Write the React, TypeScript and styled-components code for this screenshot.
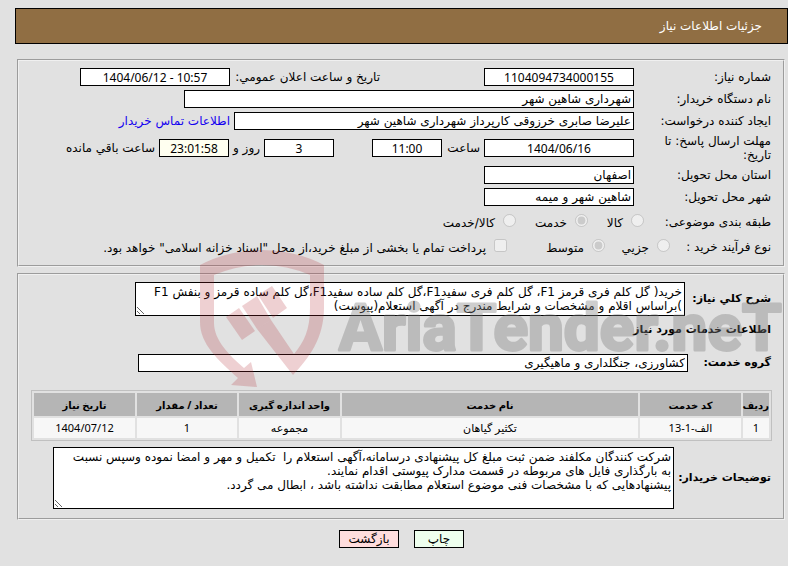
import React from "react";
import styled, { createGlobalStyle } from "styled-components";

const GlobalStyle = createGlobalStyle`
  * { box-sizing: border-box; }
  body {
    margin: 0;
    background: #e1e1e1;
    color: #000;
    font: 12px/14px "DejaVu Sans", sans-serif;
  }
`;

const Page = styled.main`
  direction: rtl;
  padding: 8px 0 16px 15px;
`;

const TitleBar = styled.h1`
  margin: 0 0 15px;
  padding: 10px 25px;
  border: 1px solid #000;
  background: #906e43;
  color: #fff;
  font-size: 12px;
  font-weight: 400;
  line-height: 14px;
`;

const Content = styled.div`
  position: relative;
  margin: 0 3px 0 2px;
`;

const Panel = styled.fieldset`
  min-width: 0;
  margin: 0 0 6px;
  padding: 7px 12px 9px;
  border: 2px groove #f0f0f0;
`;

const Rows = styled.div`
  display: flex;
  flex-direction: column;
  gap: 4px;
`;

const Row = styled.div<{ $height?: number }>`
  display: flex;
  align-items: center;
  min-height: ${(p) => p.$height ?? 18}px;
`;

const Label = styled.label`
  flex: 0 0 137px;
  padding-left: 26px;
`;

const GroupLabel = styled.span<{ $width: number }>`
  flex: 0 0 ${(p) => p.$width}px;
  white-space: nowrap;
`;

const StrongLabel = styled.label<{ $width: number }>`
  flex: 0 0 ${(p) => p.$width}px;
  font-weight: 700;
  font-size: 11px;
  white-space: nowrap;
`;

const Fields = styled.div`
  display: flex;
  flex: 1;
  min-width: 0;
  align-items: center;
  gap: 4px;
  white-space: nowrap;
`;

const Field = styled.input<{ $width: number; $center?: boolean; $tint?: string; $gap?: number }>`
  flex: 0 1 ${(p) => p.$width}px;
  min-width: 0;
  height: 18px;
  margin: 0 ${(p) => p.$gap ?? 0}px 0 0;
  padding: 0 2px;
  border: 1px solid #000;
  border-radius: 0;
  background: ${(p) => p.$tint ?? "#fff"};
  color: #000;
  font: inherit;
  font-family: ${(p) => (p.$center ? '"Noto Sans", sans-serif' : "inherit")};
  text-align: ${(p) => (p.$center ? "center" : "right")};
`;

const Caption = styled.label<{ $width?: number; $indent?: number }>`
  flex: 0 0 ${(p) => (p.$width ? `${p.$width}px` : "auto")};
  padding-right: ${(p) => p.$indent ?? 0}px;
`;

const ContactLink = styled.a`
  color: #1400f0;
  text-decoration: none;
`;

const Options = styled.div`
  display: flex;
  align-items: center;
  flex: 1;
  white-space: nowrap;
`;

const Option = styled.label<{ $width?: number }>`
  display: flex;
  align-items: flex-start;
  flex: 0 0 ${(p) => (p.$width ? `${p.$width}px` : "auto")};
  gap: 8px;
`;

const OptionText = styled.span`
  padding-top: 2px;
`;

const Tick = styled.input`
  width: 13px;
  height: 13px;
  margin: 0;
`;

const Memo = styled.textarea<{ $width: number; $height: number }>`
  display: block;
  flex: 0 1 ${(p) => p.$width}px;
  min-width: 0;
  height: ${(p) => p.$height}px;
  margin: 0;
  padding: 2px;
  border: 1px solid #000;
  border-radius: 0;
  background: #fff;
  color: #000;
  font: inherit;
  white-space: pre;
  overflow: hidden;
`;

const SectionTitle = styled.h2`
  margin: 7px 0 17px;
  font-size: 11px;
  line-height: 14px;
  font-weight: 700;
`;

const Table = styled.table`
  width: calc(100% + 1px);
  margin: 18px -1px 6px 0;
  border: 1px solid #c0c0c0;
  border-collapse: separate;
  border-spacing: 2px;
  table-layout: fixed;
  text-align: center;
  font-family: "Noto Sans", "DejaVu Sans", sans-serif;
  font-size: 11px;
`;

const HeadCell = styled.th<{ $width?: number }>`
  width: ${(p) => (p.$width ? `${p.$width}px` : "auto")};
  height: 23px;
  padding: 0;
  background: #b5b5b5;
  font-size: 10px;
  white-space: nowrap;
`;

const Cell = styled.td`
  height: 20px;
  padding: 0;
  background: #f7f7f7;
`;

const Actions = styled.div`
  display: flex;
  justify-content: center;
  gap: 15px;
  padding-top: 4px;
`;

const Button = styled.button<{ $width: number; $tint: string }>`
  width: ${(p) => p.$width}px;
  height: 18px;
  padding: 0;
  border: 1px solid #000;
  background: ${(p) => p.$tint};
  color: #000;
  font: inherit;
`;

const Watermark = styled.svg`
  position: absolute;
  top: 188px;
  left: 182px;
  width: 590px;
  height: 145px;
  pointer-events: none;
`;

const summary =
  "خرید( گل کلم فری قرمز F1، گل کلم فری سفیدF1،گل کلم ساده سفیدF1،گل کلم ساده قرمز و بنفش F1\n" +
  ")براساس اقلام و مشخصات و شرایط مندرج در آگهی استعلام(پیوست)";

const notes =
  "شرکت کنندگان مکلفند ضمن ثبت مبلغ کل پیشنهادی درسامانه،آگهی استعلام را  تکمیل و مهر و امضا نموده وسپس نسبت\n" +
  "به بارگذاری فایل های مربوطه در قسمت مدارک پیوستی اقدام نمایند.\n" +
  "پیشنهادهایی که با مشخصات فنی موضوع استعلام مطابقت نداشته باشد ، ابطال می گردد.";

const columns: { title: string; width?: number }[] = [
  { title: "ردیف", width: 26 },
  { title: "کد خدمت", width: 101 },
  { title: "نام خدمت" },
  { title: "واحد اندازه گیری", width: 101 },
  { title: "تعداد / مقدار", width: 100 },
  { title: "تاریخ نیاز", width: 101 },
];

const services = [["1", "الف-1-13", "تکثیر گیاهان", "مجموعه", "1", "1404/07/12"]];

function BrandMark() {
  return (
    <Watermark viewBox="199 247 590 145" aria-hidden="true">
      <g fill="#b02830" fillOpacity="0.22">
        <path d="M200 265Q229 250 262 250Q295 250 324 265V308C324 338 309 358 293 375L257 329L271 320L294 354C304 342 310 330 310 308V275Q287 265 262 265Q237 265 214 275V323C214 340 229 355 244 368L251 362L257 387L231 385L238 378C218 360 200 344 200 322Z" />
        <path d="M226 317L239 308L255 331L242 340Z" />
        <path d="M242 306L257 296L271 320L257 329Z" />
        <path d="M258 295L272 286L287 308L273 318Z" />
      </g>
      <text
        x="339"
        y="350"
        direction="ltr"
        fill="#808080"
        stroke="#808080"
        strokeWidth="3"
        strokeLinejoin="round"
        opacity="0.38"
        fontFamily="Roboto, sans-serif"
        fontWeight="700"
        fontSize="64"
      >
        AriaTender.neT
      </text>
    </Watermark>
  );
}

export default function App() {
  return (
    <>
      <GlobalStyle />
      <Page lang="fa">
        <TitleBar>جزئیات اطلاعات نیاز</TitleBar>
        <Content>
          <Panel>
            <Rows>
              <Row>
                <Label htmlFor="number">شماره نیاز:</Label>
                <Fields>
                  <Field id="number" $width={150} $center readOnly value="1104094734000155" />
                  <Caption htmlFor="announced" $width={246} $indent={100}>
                    تاریخ و ساعت اعلان عمومي:
                  </Caption>
                  <Field id="announced" $width={150} $center readOnly value="1404/06/12 - 10:57" dir="ltr" />
                </Fields>
              </Row>
              <Row>
                <Label htmlFor="agency">نام دستگاه خریدار:</Label>
                <Fields>
                  <Field id="agency" $width={450} readOnly value="شهرداری شاهین شهر" />
                </Fields>
              </Row>
              <Row>
                <Label htmlFor="creator">ایجاد کننده درخواست:</Label>
                <Fields>
                  <Field id="creator" $width={400} readOnly value="علیرضا صابری خرزوقی کارپرداز شهرداری شاهین شهر" />
                  <ContactLink href="#contact">اطلاعات تماس خریدار</ContactLink>
                </Fields>
              </Row>
              <Row $height={28}>
                <Label htmlFor="deadline">مهلت ارسال پاسخ: تا تاریخ:</Label>
                <Fields>
                  <Field id="deadline" $width={150} $center readOnly value="1404/06/16" />
                  <Caption htmlFor="hour" $width={34}>ساعت</Caption>
                  <Field id="hour" $width={70} $center readOnly value="11:00" />
                  <Field id="days" $width={70} $gap={34} $center readOnly value="3" />
                  <Caption htmlFor="days" $width={26}>روز و</Caption>
                  <Field id="left" $width={70} $center $tint="#fffff0" readOnly value="23:01:58" />
                  <Caption htmlFor="left">ساعت باقي مانده</Caption>
                </Fields>
              </Row>
              <Row>
                <Label htmlFor="province">استان محل تحویل:</Label>
                <Fields>
                  <Field id="province" $width={150} readOnly value="اصفهان" />
                </Fields>
              </Row>
              <Row>
                <Label htmlFor="city">شهر محل تحویل:</Label>
                <Fields>
                  <Field id="city" $width={150} readOnly value="شاهین شهر و میمه" />
                </Fields>
              </Row>
              <Row $height={24}>
                <GroupLabel $width={127}>طبقه بندی موضوعی:</GroupLabel>
                <Options>
                  <Option $width={56}>
                    <Tick type="radio" name="subject" disabled />
                    <OptionText>کالا</OptionText>
                  </Option>
                  <Option $width={72}>
                    <Tick type="radio" name="subject" disabled defaultChecked />
                    <OptionText>خدمت</OptionText>
                  </Option>
                  <Option>
                    <Tick type="radio" name="subject" disabled />
                    <OptionText>کالا/خدمت</OptionText>
                  </Option>
                </Options>
              </Row>
              <Row>
                <GroupLabel $width={101}>نوع فرآیند خرید :</GroupLabel>
                <Options>
                  <Option $width={65}>
                    <Tick type="radio" name="process" disabled />
                    <OptionText>جزيي</OptionText>
                  </Option>
                  <Option $width={98}>
                    <Tick type="radio" name="process" disabled defaultChecked />
                    <OptionText>متوسط</OptionText>
                  </Option>
                  <Option>
                    <Tick type="checkbox" disabled />
                    <OptionText>
                      پرداخت تمام یا بخشی از مبلغ خرید،از محل "اسناد خزانه اسلامی" خواهد بود.
                    </OptionText>
                  </Option>
                </Options>
              </Row>
            </Rows>
          </Panel>

          <Panel>
            <Row>
              <StrongLabel htmlFor="summary" $width={86}>شرح کلي نیاز:</StrongLabel>
              <Memo id="summary" $width={550} $height={34} readOnly defaultValue={summary} />
            </Row>
            <SectionTitle>اطلاعات خدمات مورد نیاز</SectionTitle>
            <Row>
              <StrongLabel htmlFor="group" $width={83}>گروه خدمت:</StrongLabel>
              <Field id="group" $width={550} readOnly value="کشاورزی، جنگلداری و ماهیگیری" />
            </Row>
            <Table>
              <thead>
                <tr>
                  {columns.map((c) => (
                    <HeadCell key={c.title} $width={c.width}>{c.title}</HeadCell>
                  ))}
                </tr>
              </thead>
              <tbody>
                {services.map((row) => (
                  <tr key={row[0]}>
                    {row.map((value, i) => (
                      <Cell key={i}>{value}</Cell>
                    ))}
                  </tr>
                ))}
              </tbody>
            </Table>
            <Row>
              <StrongLabel htmlFor="notes" $width={97}>توضیحات خریدار:</StrongLabel>
              <Memo id="notes" $width={621} $height={62} readOnly defaultValue={notes} />
            </Row>
          </Panel>
          <BrandMark />
        </Content>
        <Actions>
          <Button type="button" $width={50} $tint="#eeffee">چاپ</Button>
          <Button type="button" $width={60} $tint="#ffdddd">بازگشت</Button>
        </Actions>
      </Page>
    </>
  );
}
